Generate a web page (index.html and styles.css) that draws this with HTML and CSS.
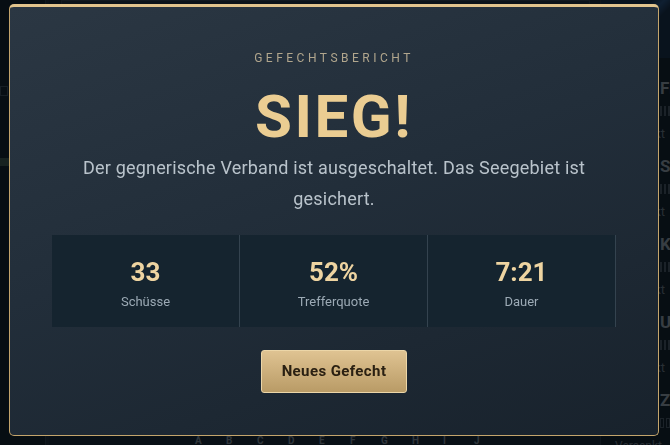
FILE: index.html
```html
<!DOCTYPE html>
<html lang="de">
<head>
    <meta charset="UTF-8">
    <meta name="viewport" content="width=device-width, initial-scale=1.0">
    <title>Seeschlacht</title>
    <link rel="stylesheet" href="styles.css">
</head>
<body>
    <div class="game">
        <aside class="side">
            <div class="side-checks"><span></span><span></span></div>
            <div class="side-bar"></div>
        </aside>

        <main class="board">
            <div class="board-top"></div>
            <div class="board-grid"></div>
            <div class="board-cols">
                <span>A</span><span>B</span><span>C</span><span>D</span><span>E</span>
                <span>F</span><span>G</span><span>H</span><span>I</span><span>J</span>
            </div>
        </main>

        <aside class="fleet">
            <div class="fleet-top"></div>
            <div class="ship">
                <div class="ship-name">Flugzeugträger</div>
                <div class="ship-cells"><i></i><i></i><i></i><i></i><i></i></div>
                <div class="ship-state">Intakt</div>
            </div>
            <div class="ship">
                <div class="ship-name">Schlachtschiff</div>
                <div class="ship-cells"><i></i><i></i><i></i><i></i></div>
                <div class="ship-state">Intakt</div>
            </div>
            <div class="ship">
                <div class="ship-name">Kreuzer</div>
                <div class="ship-cells"><i></i><i></i><i></i></div>
                <div class="ship-state">Intakt</div>
            </div>
            <div class="ship">
                <div class="ship-name">U-Boot</div>
                <div class="ship-cells"><i></i><i></i><i></i></div>
                <div class="ship-state">Intakt</div>
            </div>
            <div class="ship">
                <div class="ship-name">Zerstörer</div>
                <div class="ship-cells"><i></i><i></i></div>
            </div>
            <div class="fleet-note">Versenkt</div>
        </aside>
    </div>

    <div class="overlay">
        <section class="report">
            <div class="report-eyebrow">Gefechtsbericht</div>
            <h1 class="report-title">SIEG!</h1>
            <p class="report-text">Der gegnerische Verband ist ausgeschaltet. Das Seegebiet ist gesichert.</p>

            <div class="stats">
                <div class="stat">
                    <div class="stat-value">33</div>
                    <div class="stat-label">Schüsse</div>
                </div>
                <div class="stat">
                    <div class="stat-value">52%</div>
                    <div class="stat-label">Trefferquote</div>
                </div>
                <div class="stat">
                    <div class="stat-value">7:21</div>
                    <div class="stat-label">Dauer</div>
                </div>
            </div>

            <button class="btn-new">Neues Gefecht</button>
        </section>
    </div>
</body>
</html>
```

FILE: styles.css
```css
* {
    box-sizing: border-box;
}
html, body {
    height: 100%;
}
body {
    margin: 0;
    font-family: Roboto, "Noto Sans", sans-serif;
    background: #172330;
    color: #c8d0d8;
    overflow: hidden;
}

/* game screen behind the dialog */
.game {
    display: grid;
    grid-template-columns: 46px 1fr 70px;
    height: 100vh;
}
.side {
    background: #121c26;
    border-right: 1px solid #34424f;
}
.side-checks {
    display: flex;
    gap: 4px;
    margin-top: 86px;
}
.side-checks span {
    width: 8px;
    height: 10px;
    border: 1px solid #4b5865;
}
.side-bar {
    margin-top: 62px;
    height: 8px;
    background: #4d6a55;
}
.board {
    display: flex;
    flex-direction: column;
    padding: 0 10px 0 12px;
    border-left: 3px solid #1f2c39;
}
.board-top {
    height: 6px;
    background: #24313e;
    border: 1px solid #3a4855;
}
.board-grid {
    flex: 1;
}
.board-cols {
    display: flex;
    padding-left: 134px;
    height: 9px;
    font-size: 10px;
    line-height: 9px;
    font-weight: bold;
    color: #aab4be;
}
.board-cols span {
    width: 31px;
}
.fleet {
    background: #111b25;
    border-left: 1px solid #2e3b47;
    overflow: hidden;
}
.fleet-top {
    height: 58px;
    background: linear-gradient(135deg, #1a2f4a 40%, #2f5f9a 50%, #1a2f4a 60%);
}
.ship {
    padding: 20px 0 0 59px;
    height: 78px;
}
.ship-name {
    font-size: 17px;
    line-height: 20px;
    font-weight: bold;
    white-space: nowrap;
}
.ship-cells {
    display: flex;
    gap: 2px;
    margin-top: 8px;
}
.ship-cells i {
    width: 12px;
    height: 10px;
    border: 1px solid #5c6975;
}
.ship-state {
    margin: 10px 5px 0 -60px;
    font-size: 13px;
    line-height: 15px;
    text-align: right;
    color: #8d99a4;
    white-space: nowrap;
}
.fleet-note {
    margin-top: -8px;
    padding-left: 14px;
    font-size: 12px;
    line-height: 12px;
    color: #8d99a4;
}

/* dim layer and dialog */
.overlay {
    position: fixed;
    inset: 0;
    background: rgba(4, 9, 13, 0.74);
    display: flex;
    align-items: center;
    justify-content: center;
}
.report {
    width: 650px;
    margin-left: -2px;
    margin-top: -5px;
    padding: 43px 42px 42px;
    background: linear-gradient(160deg, #2b3743 0%, #222e3a 45%, #18222c 100%);
    border: 1px solid #c4a56c;
    border-top: 3px solid #e2c48d;
    border-radius: 5px;
    text-align: center;
}
.report-eyebrow {
    font-size: 12px;
    line-height: 16px;
    letter-spacing: 3.5px;
    text-transform: uppercase;
    color: #b1a68d;
}
.report-title {
    margin: 16px 0 0;
    font-size: 60px;
    line-height: 70px;
    font-weight: 700;
    letter-spacing: 2.5px;
    color: #ebcd92;
}
.report-text {
    margin: 0;
    font-size: 18px;
    line-height: 31px;
    letter-spacing: 0.2px;
    color: #b9c3cb;
}
.stats {
    display: grid;
    grid-template-columns: repeat(3, 1fr);
    margin-top: 21px;
    background: #15242f;
}
.stat {
    padding: 22px 0 16px;
    border-right: 1px solid #34434f;
}
.stat-value {
    font-size: 26px;
    line-height: 30px;
    font-weight: 700;
    color: #eed4a1;
}
.stat-label {
    margin-top: 6px;
    font-size: 13px;
    line-height: 18px;
    color: #9caab5;
}
.btn-new {
    margin-top: 23px;
    padding: 12px 20px;
    font-family: inherit;
    font-size: 15px;
    line-height: 17px;
    font-weight: 700;
    letter-spacing: 0.4px;
    color: #2a2012;
    background: linear-gradient(180deg, #dfc392 0%, #b99b66 100%);
    border: 1px solid #ecd6a8;
    border-radius: 3px;
    cursor: pointer;
}
.btn-new:hover {
    background: linear-gradient(180deg, #e8cf9f 0%, #c4a670 100%);
}
```
